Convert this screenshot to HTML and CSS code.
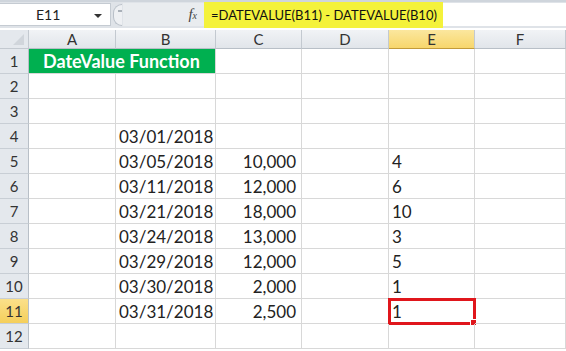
FILE: index.html
```html
<!DOCTYPE html>
<html lang="en">
<head>
    <meta charset="UTF-8">
    <title>DateValue Function</title>
    <link rel="stylesheet" href="styles.css">
</head>
<body>
    <div class="formula-bar">
        <div class="name-box">
            <span class="cell-ref">E11</span>
            <span class="drop-arrow"></span>
        </div>
        <div class="grip"><span><i></i></span></div>
        <div class="fx-area"><span class="fx">f<small>x</small></span></div>
        <div class="formula">=DATEVALUE(B11) - DATEVALUE(B10)</div>
        <div class="formula-rest"></div>
    </div>

    <div class="sheet">
        <div class="corner"><span class="corner-tri"></span></div>
        <div class="col-head">A</div>
        <div class="col-head">B</div>
        <div class="col-head">C</div>
        <div class="col-head">D</div>
        <div class="col-head active">E</div>
        <div class="col-head">F</div>

        <div class="row-head">1</div>
        <div class="cell title">DateValue Function</div>
        <div class="cell"></div><div class="cell"></div><div class="cell"></div><div class="cell"></div>

        <div class="row-head">2</div>
        <div class="cell"></div><div class="cell"></div><div class="cell"></div><div class="cell"></div><div class="cell"></div><div class="cell"></div>

        <div class="row-head">3</div>
        <div class="cell"></div><div class="cell"></div><div class="cell"></div><div class="cell"></div><div class="cell"></div><div class="cell"></div>

        <div class="row-head">4</div>
        <div class="cell"></div><div class="cell">03/01/2018</div><div class="cell"></div><div class="cell"></div><div class="cell"></div><div class="cell"></div>

        <div class="row-head">5</div>
        <div class="cell"></div><div class="cell">03/05/2018</div><div class="cell num">10,000</div><div class="cell"></div><div class="cell">4</div><div class="cell"></div>

        <div class="row-head">6</div>
        <div class="cell"></div><div class="cell">03/11/2018</div><div class="cell num">12,000</div><div class="cell"></div><div class="cell">6</div><div class="cell"></div>

        <div class="row-head">7</div>
        <div class="cell"></div><div class="cell">03/21/2018</div><div class="cell num">18,000</div><div class="cell"></div><div class="cell">10</div><div class="cell"></div>

        <div class="row-head">8</div>
        <div class="cell"></div><div class="cell">03/24/2018</div><div class="cell num">13,000</div><div class="cell"></div><div class="cell">3</div><div class="cell"></div>

        <div class="row-head">9</div>
        <div class="cell"></div><div class="cell">03/29/2018</div><div class="cell num">12,000</div><div class="cell"></div><div class="cell">5</div><div class="cell"></div>

        <div class="row-head">10</div>
        <div class="cell"></div><div class="cell">03/30/2018</div><div class="cell num">2,000</div><div class="cell"></div><div class="cell">1</div><div class="cell"></div>

        <div class="row-head active">11</div>
        <div class="cell"></div><div class="cell">03/31/2018</div><div class="cell num">2,500</div><div class="cell"></div><div class="cell selected">1<span class="handle"></span></div><div class="cell"></div>

        <div class="row-head">12</div>
        <div class="cell"></div><div class="cell"></div><div class="cell"></div><div class="cell"></div><div class="cell"></div><div class="cell"></div>
    </div>
</body>
</html>
```

FILE: styles.css
```css
body {
    margin: 0;
    width: 566px;
    height: 351px;
    overflow: hidden;
    background: #fff;
    font-family: Lato, "Open Sans", sans-serif;
    color: #222;
}

/* formula bar */
.formula-bar {
    display: flex;
    height: 28px;
    background: #dfe3e8;
    border-top: 2px solid #cfd5dc;
    box-sizing: border-box;
}

.name-box {
    width: 110px;
    background: #fff;
    border: 1px solid #c5cbd2;
    border-left: none;
    margin: 1px 0 2px;
    display: flex;
    align-items: center;
    position: relative;
    font-size: 14px;
}

.cell-ref {
    margin-left: 36px;
}

.drop-arrow {
    position: absolute;
    right: 8px;
    top: 10px;
    border-left: 4px solid transparent;
    border-right: 4px solid transparent;
    border-top: 4px solid #333;
}

.grip {
    width: 12px;
    display: flex;
    align-items: center;
    justify-content: center;
}

.grip span {
    display: flex;
    align-items: center;
    justify-content: flex-end;
    width: 8px;
    height: 20px;
    border: 1px solid #b9c0c8;
    border-right: none;
    border-radius: 10px 0 0 10px;
    background: #eef0f3;
}

.grip i {
    display: block;
    width: 4px;
    height: 2px;
    margin-bottom: 8px;
    background: #a9b0b8;
}

.fx-area {
    width: 74px;
    display: flex;
    align-items: center;
    justify-content: flex-end;
    padding-right: 7px;
    background: #e9ecef;
    margin: 1px 0 2px;
}

.fx {
    font-family: "Liberation Serif", serif;
    font-style: italic;
    font-size: 15px;
    color: #444;
}

.fx small {
    font-size: 10px;
}

.formula {
    width: 239px;
    background: #f4f23b;
    display: flex;
    align-items: center;
    padding-left: 7px;
    box-sizing: border-box;
    font-size: 13px;
    white-space: nowrap;
    color: #111;
}

.formula-rest {
    flex: 1;
    background: #fff;
    margin: 1px 0 2px;
}

/* sheet grid */
.sheet {
    display: grid;
    grid-template-columns: 29px 87px 100px 86px 87px 86px 1fr;
    grid-template-rows: 19px repeat(12, 25px);
    background: #fff;
    margin-top: 2px;
}

.corner {
    background: #e4e8ed;
    border-right: 1px solid #c3c9d0;
    border-bottom: 1px solid #c3c9d0;
    position: relative;
}

.corner-tri {
    position: absolute;
    right: 4px;
    bottom: 3px;
    border-left: 11px solid transparent;
    border-bottom: 11px solid #d0d5db;
}

.col-head {
    background: linear-gradient(#f1f3f6, #e1e5ea);
    border-right: 1px solid #c3c9d0;
    border-bottom: 1px solid #b8bfc7;
    display: flex;
    align-items: center;
    justify-content: center;
    font-size: 15px;
    color: #333;
}

.col-head.active {
    background: linear-gradient(#fbe79e, #f7d66c);
    border-bottom: 1px solid #c29b3a;
}

.row-head {
    background: #e4e8ed;
    border-right: 1px solid #b8bfc7;
    border-bottom: 1px solid #c8ced5;
    display: flex;
    align-items: center;
    justify-content: center;
    font-size: 15px;
    color: #333;
}

.row-head.active {
    background: linear-gradient(#fbe08a, #f5cf5b);
}

.cell {
    border-right: 1px solid #d8d8d8;
    border-bottom: 1px solid #d8d8d8;
    display: flex;
    align-items: center;
    padding: 0 3px;
    font-size: 17px;
    white-space: nowrap;
    position: relative;
}

.cell.num {
    justify-content: flex-end;
    padding-right: 5px;
}

.cell.title {
    grid-column: span 2;
    background: #00b050;
    color: #fff;
    font-weight: bold;
    font-size: 18px;
    padding-left: 14px;
}

.cell.selected {
    outline: 3px solid #e0161c;
    outline-offset: -2px;
}

.handle {
    position: absolute;
    right: -3px;
    bottom: -3px;
    width: 5px;
    height: 5px;
    background: #e0161c;
    border: 1px solid #fff;
}
```
